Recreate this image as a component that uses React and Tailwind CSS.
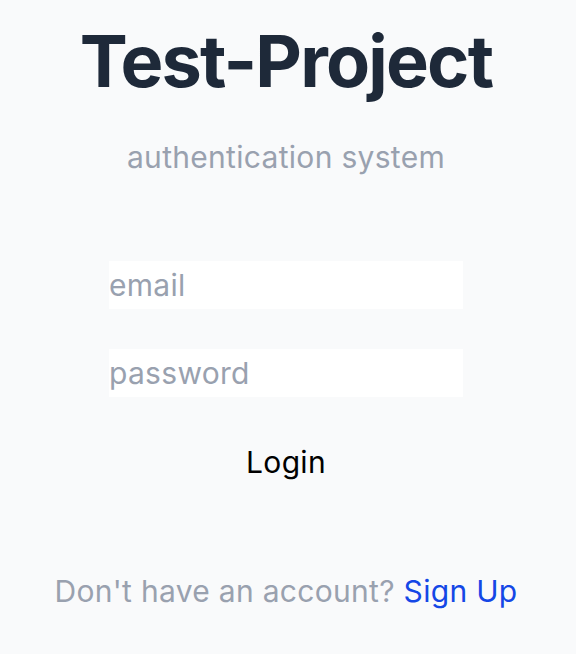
export default function App() {
  return (
    <div className="min-h-screen bg-gray-50 flex flex-col items-center pr-1 font-['Inter',sans-serif]">
      <h1 className="mt-[17px] text-[72px] leading-[88px] font-bold text-gray-800 tracking-tight">Test-Project</h1>
      <p className="mt-[34px] text-[30px] leading-[36px] tracking-[0.3px] text-gray-400">authentication system</p>
      <form className="mt-[86px] flex flex-col items-center" onSubmit={e => e.preventDefault()}>
        <input
          type="email"
          placeholder="email"
          className="w-[354px] h-[48px] bg-white text-[30px] tracking-[0.3px] placeholder:text-gray-400 outline-none"
        />
        <input
          type="password"
          placeholder="password"
          className="mt-[40px] w-[354px] h-[48px] bg-white text-[30px] tracking-[0.3px] placeholder:text-gray-400 outline-none"
        />
        <button type="submit" className="mt-[47px] text-[30px] leading-[36px] tracking-[0.3px] text-black">Login</button>
      </form>
      <p className="mt-[93px] text-[30px] leading-[36px] tracking-[0.3px] text-gray-400">
        Don't have an account? <a href="#" className="text-blue-700">Sign Up</a>
      </p>
    </div>
  )
}
